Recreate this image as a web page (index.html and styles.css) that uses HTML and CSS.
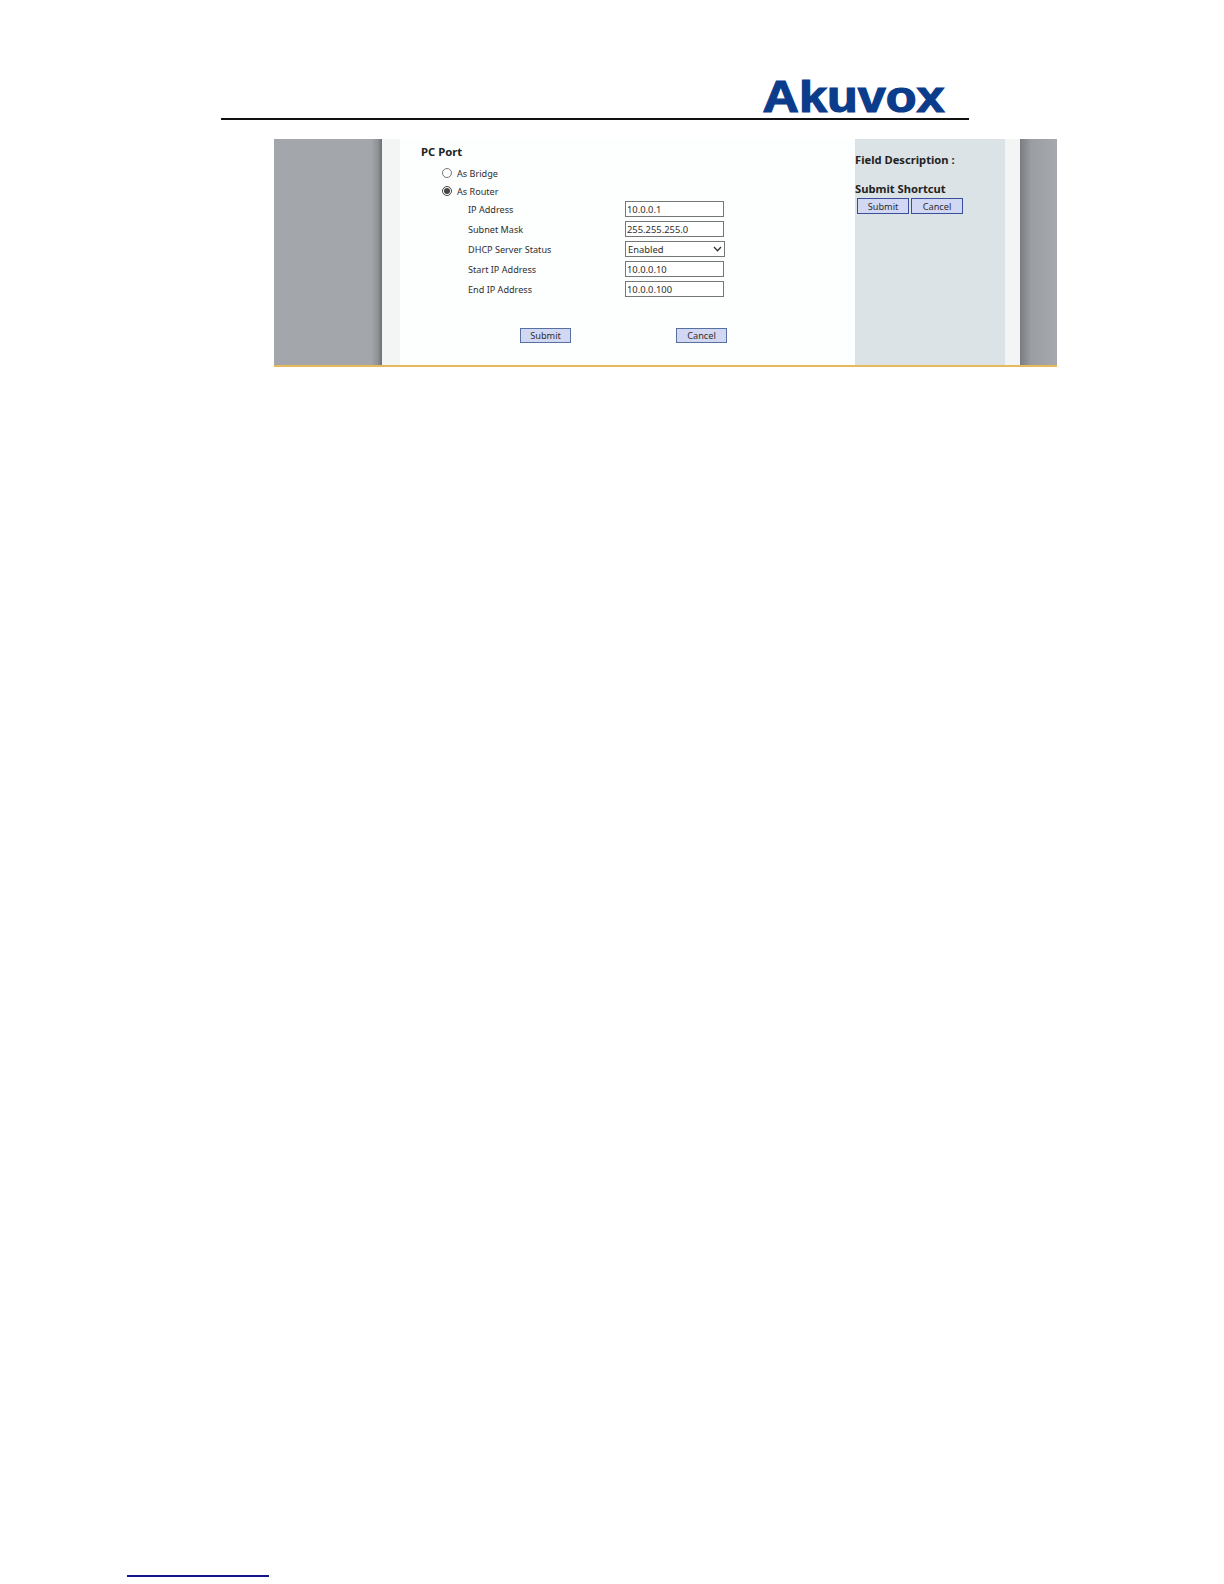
FILE: index.html
```html
<!DOCTYPE html>
<html lang="en">
<head>
<meta charset="utf-8">
<title>PC Port</title>
<link rel="stylesheet" href="styles.css">
</head>
<body>
<div class="page">
  <header class="head">
    <span class="logo">Akuvox</span>
  </header>
  <div class="shot">
    <div class="side side-left"></div>
    <div class="strip"></div>
    <main class="form">
      <h2 class="title">PC Port</h2>
      <label class="radio"><input type="radio" name="mode"> As Bridge</label>
      <label class="radio"><input type="radio" name="mode" checked> As Router</label>
      <div class="fields">
        <span class="lbl">IP Address</span><input class="box" type="text" value="10.0.0.1">
        <span class="lbl">Subnet Mask</span><input class="box" type="text" value="255.255.255.0">
        <span class="lbl">DHCP Server Status</span>
        <div class="sel-wrap">
          <select class="box sel"><option>Enabled</option></select>
          <svg class="chev" width="9" height="6" viewBox="0 0 9 6"><path d="M1 1l3.5 3.8L8 1" fill="none" stroke="#333" stroke-width="1.3"/></svg>
        </div>
        <span class="lbl">Start IP Address</span><input class="box" type="text" value="10.0.0.10">
        <span class="lbl">End IP Address</span><input class="box" type="text" value="10.0.0.100">
      </div>
      <div class="actions">
        <button class="btn" type="button">Submit</button>
        <button class="btn" type="button">Cancel</button>
      </div>
    </main>
    <aside class="desc">
      <h3 class="desc-head">Field Description :</h3>
      <h3 class="desc-head short">Submit Shortcut</h3>
      <div class="short-btns">
        <button class="btn small" type="button">Submit</button>
        <button class="btn small" type="button">Cancel</button>
      </div>
    </aside>
    <div class="strip strip-right"></div>
    <div class="side side-right"></div>
  </div>
  <div class="filler"></div>
  <div class="foot-rule"></div>
</div>
</body>
</html>
```
FILE: styles.css
```css
html, body {
  margin: 0;
  background: #fff;
}
.page {
  height: 1584px;
  display: flex;
  flex-direction: column;
  font-family: "Noto Sans", sans-serif;
  color: #2e2e2e;
  overflow: hidden;
}
.head {
  margin-left: 221px;
  width: 748px;
  height: 118px;
  border-bottom: 2px solid #111;
  display: flex;
  justify-content: flex-end;
  align-items: flex-end;
}
.logo {
  font: bold 45px/1 "Liberation Sans", sans-serif;
  color: #0b3c8c;
  -webkit-text-stroke: 1.2px #0b3c8c;
  transform: scaleX(1.12);
  transform-origin: right bottom;
  margin-right: 24px;
  margin-bottom: -1px;
}
.shot {
  margin-top: 19px;
  margin-left: 274px;
  width: 783px;
  height: 226px;
  display: flex;
  border-bottom: 2px solid #e8b95a;
  background: #fff;
}
.side-left {
  width: 108px;
  background: linear-gradient(to right, #a3a7ab 0, #a3a7ab 90%, #8f9296 96%, #6f7074 100%);
}
.side-right {
  width: 37px;
  background: linear-gradient(to right, #7b7c81 0, #9a9da1 30%, #a6a9ad 100%);
}
.strip {
  width: 18px;
  background: #f3f4f4;
}
.strip-right {
  width: 15px;
}
.form {
  width: 455px;
  background: #fdfefe;
  font-size: 9.1px;
}
.title {
  margin: 6px 0 5px 21px;
  font: bold 11.3px/14px "Noto Sans", sans-serif;
  color: #222;
}
.radio {
  display: flex;
  align-items: center;
  gap: 5px;
  height: 18px;
  margin-left: 42px;
}
.radio input {
  width: 10px;
  height: 10px;
  margin: 0;
  accent-color: #444;
}
.fields {
  display: grid;
  grid-template-columns: 157px 99px;
  grid-auto-rows: 16px;
  row-gap: 4px;
  align-items: center;
  margin: 1px 0 0 68px;
}
.box {
  box-sizing: border-box;
  width: 99px;
  height: 16px;
  padding: 0 1px;
  border: 1px solid #767676;
  border-radius: 0;
  background: #fff;
  color: #2e2e2e;
  font: 9.4px "Noto Sans", sans-serif;
}
.sel-wrap {
  position: relative;
  height: 16px;
}
.sel {
  width: 100px;
  padding: 0 2px;
  appearance: none;
  outline: none;
}
.chev {
  position: absolute;
  right: 2px;
  top: 5px;
}
.actions {
  display: flex;
  gap: 105px;
  margin: 31px 0 0 120px;
}
.btn {
  box-sizing: border-box;
  width: 51px;
  height: 15px;
  padding: 0;
  border: 1px solid #56709f;
  border-radius: 0;
  background: #d2d7f3;
  color: #2e2e2e;
  font: 9.2px/13px "Noto Sans", sans-serif;
}
.desc {
  width: 150px;
  background: #dce3e7;
}
.desc-head {
  margin: 14px 0 0;
  font: bold 11.2px/14px "Noto Sans", sans-serif;
  color: #222;
  white-space: nowrap;
}
.short {
  margin-top: 15px;
}
.short-btns {
  display: flex;
  gap: 2px;
  margin: 2px 0 0 2px;
}
.small {
  width: 52px;
  height: 16px;
  border-color: #3a4f9a;
}
.filler {
  flex: 1;
}
.foot-rule {
  margin: 0 0 7px 127px;
  width: 142px;
  height: 2px;
  background: #14148c;
}
```
